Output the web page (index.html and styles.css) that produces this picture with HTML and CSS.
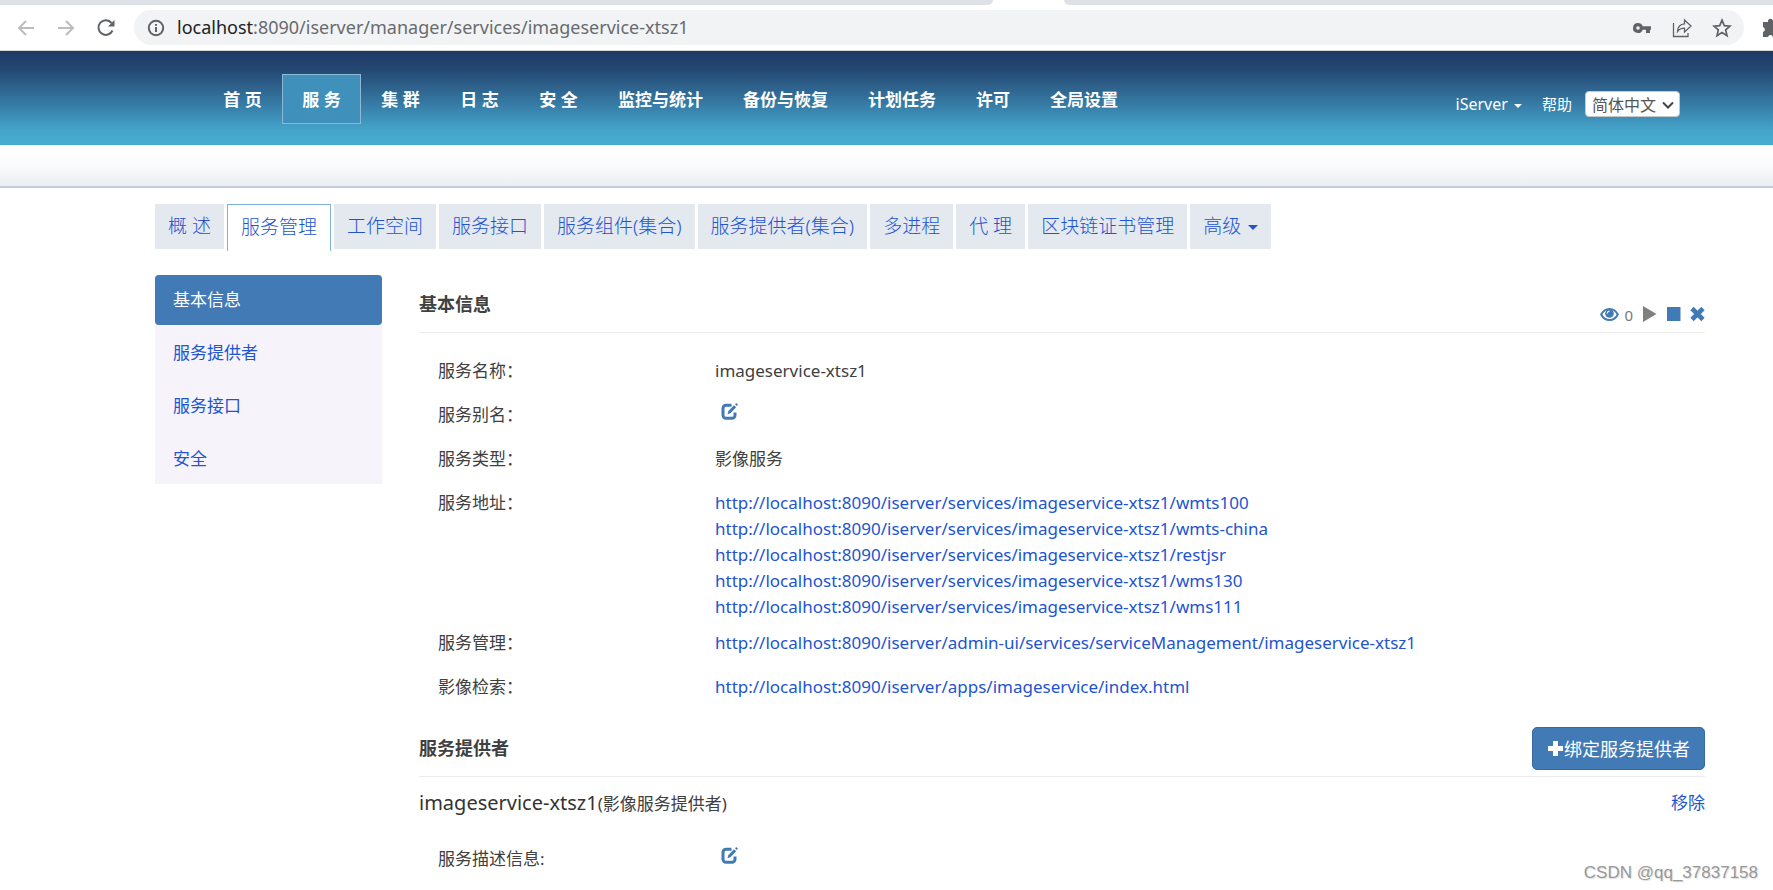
FILE: index.html
```html
<!DOCTYPE html>
<html lang="zh-CN">
<head>
<meta charset="utf-8">
<title>iServer 服务管理</title>
<link rel="stylesheet" href="styles.css">
</head>
<body>
<svg class="sprite" aria-hidden="true">
  <symbol id="edit" viewBox="0 0 17 17">
    <path d="M10.500 2.200H5a3 3 0 0 0-3 3v7a3 3 0 0 0 3 3h6a3 3 0 0 0 3-3V9.500" fill="none" stroke="currentColor" stroke-width="3"/>
    <path d="M6.500 11.200l.7-3 5.800-6 2.200 2-5.800 6z M14 1.200L15.200 0l1.800 1.700-1.200 1.300z" fill="currentColor"/>
  </symbol>
</svg>

<div class="browser">
  <div class="tabstrip"><span class="tab-left"></span><span class="tab-right"></span></div>
  <div class="toolbar">
    <div class="history">
      <button class="tool dim" aria-label="后退"><svg viewBox="0 0 20 20"><path d="M18 10H3M10 3l-7 7 7 7"/></svg></button>
      <button class="tool dim" aria-label="前进"><svg viewBox="0 0 20 20"><path d="M2 10h15M10 3l7 7-7 7"/></svg></button>
      <button class="tool" aria-label="刷新"><svg viewBox="0 0 20 20"><path d="M16.500 12.500A7.300 7.300 0 1 1 15.500 5"/><path d="M18.500 2v6.500H12z" fill="currentColor" stroke="none"/></svg></button>
    </div>
    <div class="omnibox">
      <svg class="info" viewBox="0 0 18 18"><circle cx="9" cy="9" r="7.200"/><path d="M9 8v5M9 5v1.800"/></svg>
      <span class="url"><b>localhost</b>:8090/iserver/manager/services/imageservice-xtsz1</span>
      <div class="omni-actions">
        <button class="tool" aria-label="密码"><svg viewBox="0 0 20 20"><path d="M6 5a5 5 0 1 0 4.700 6.700H14V15h4v-3.300h1V8.300h-8.300A5 5 0 0 0 6 5zm0 3.200a1.800 1.800 0 1 1 0 3.600 1.800 1.800 0 0 1 0-3.600z" fill="currentColor" stroke="none"/></svg></button>
        <button class="tool thin" aria-label="分享"><svg viewBox="0 0 20 20"><path d="M1.500 5v13.500H16V15M5.500 13.500c.3-5 3-7.500 7-7.700V2l6.500 6-6.500 6v-3.800c-3 0-5.200.8-7 3.300z"/></svg></button>
        <button class="tool" aria-label="收藏"><svg viewBox="0 0 20 20"><path d="M10 2.200l2.300 5.400 5.700.5-4.300 3.800 1.300 5.800-5-3.100-5 3.100 1.300-5.800L2 8.100l5.700-.5z" stroke-width="1.700"/></svg></button>
      </div>
    </div>
    <button class="tool ext" aria-label="扩展程序"><svg viewBox="0 0 20 20"><path d="M1 4h5a2.600 2.600 0 1 1 5 0h5v5a2.600 2.600 0 1 1 0 5v5h-5a2.600 2.600 0 0 0-5 0H1v-5a2.600 2.600 0 0 0 0-5z" fill="currentColor" stroke="none"/></svg></button>
  </div>
</div>

<header class="header">
  <nav class="nav">
    <a href="#">首 页</a>
    <a href="#" class="current">服 务</a>
    <a href="#">集 群</a>
    <a href="#">日 志</a>
    <a href="#">安 全</a>
    <a href="#">监控与统计</a>
    <a href="#">备份与恢复</a>
    <a href="#">计划任务</a>
    <a href="#">许可</a>
    <a href="#">全局设置</a>
  </nav>
  <div class="user">
    <a href="#" class="account">iServer <span class="caret"></span></a>
    <a href="#">帮助</a>
    <div class="lang">
      <select aria-label="语言"><option>简体中文</option><option>English</option></select>
      <svg viewBox="0 0 12 8"><path d="M1 1.500l5 5 5-5"/></svg>
    </div>
  </div>
</header>
<div class="subheader"></div>

<div class="page">
  <nav class="tabs">
    <a href="#">概 述</a>
    <a href="#" class="current">服务管理</a>
    <a href="#">工作空间</a>
    <a href="#">服务接口</a>
    <a href="#">服务组件(集合)</a>
    <a href="#">服务提供者(集合)</a>
    <a href="#">多进程</a>
    <a href="#">代 理</a>
    <a href="#">区块链证书管理</a>
    <a href="#">高级 <span class="caret"></span></a>
  </nav>

  <div class="columns">
    <nav class="side">
      <a href="#" class="current">基本信息</a>
      <a href="#">服务提供者</a>
      <a href="#">服务接口</a>
      <a href="#">安全</a>
    </nav>

    <main class="main">
      <section>
        <div class="head">
          <h2>基本信息</h2>
          <div class="controls">
            <button class="glyph eye" aria-label="访问次数"><svg viewBox="0 0 19 15"><path d="M1.200 7.500C3 4 6 2 9.500 2s6.500 2 8.300 5.500C16 11 13 13 9.500 13S3 11 1.200 7.500z" fill="none" stroke="currentColor" stroke-width="2"/><circle cx="9.500" cy="6.500" r="4.300" fill="currentColor"/><path d="M7.300 6.500a2.200 2.200 0 0 1 2.200-2.300" fill="none" stroke="#fff" stroke-width="1.200"/></svg></button>
            <span class="count">0</span>
            <button class="glyph off" aria-label="启动"><svg viewBox="0 0 15 16"><path d="M1 0l13.500 8L1 16z" fill="currentColor"/></svg></button>
            <button class="glyph" aria-label="停止"><svg viewBox="0 0 15 16"><path d="M1 1h13.500v14H1z" fill="currentColor"/></svg></button>
            <button class="glyph" aria-label="删除"><svg viewBox="0 0 15 16"><path d="M2 2.500l11 11M13 2.500l-11 11" stroke="currentColor" stroke-width="4.600"/></svg></button>
          </div>
        </div>
        <dl class="rows">
          <dt>服务名称：</dt><dd>imageservice-xtsz1</dd>
          <dt>服务别名：</dt><dd><button class="edit" aria-label="编辑别名"><svg><use href="#edit"/></svg></button></dd>
          <dt>服务类型：</dt><dd>影像服务</dd>
          <dt>服务地址：</dt>
          <dd>
            <a href="#">http://localhost:8090/iserver/services/imageservice-xtsz1/wmts100</a>
            <a href="#">http://localhost:8090/iserver/services/imageservice-xtsz1/wmts-china</a>
            <a href="#">http://localhost:8090/iserver/services/imageservice-xtsz1/restjsr</a>
            <a href="#">http://localhost:8090/iserver/services/imageservice-xtsz1/wms130</a>
            <a href="#">http://localhost:8090/iserver/services/imageservice-xtsz1/wms111</a>
          </dd>
          <dt>服务管理：</dt><dd><a href="#">http://localhost:8090/iserver/admin-ui/services/serviceManagement/imageservice-xtsz1</a></dd>
          <dt>影像检索：</dt><dd><a href="#">http://localhost:8090/iserver/apps/imageservice/index.html</a></dd>
        </dl>
      </section>

      <section>
        <div class="head">
          <h2>服务提供者</h2>
          <button class="bind"><svg viewBox="0 0 17 17"><path d="M8.500 1v15M1 8.500h15"/></svg>绑定服务提供者</button>
        </div>
        <div class="provider">
          <h3>imageservice-xtsz1<small>(影像服务提供者)</small></h3>
          <a href="#">移除</a>
        </div>
        <dl class="rows desc">
          <dt>服务描述信息:</dt><dd><button class="edit" aria-label="编辑描述"><svg><use href="#edit"/></svg></button></dd>
        </dl>
      </section>
    </main>
  </div>
</div>
<div class="watermark">CSDN @qq_37837158</div>
</body>
</html>
```
FILE: styles.css
```css
* { box-sizing: border-box; }
body {
  margin: 0;
  min-height: 100vh;
  overflow: hidden;
  position: relative;
  background: #fff;
  color: #404040;
  font: 17px/26px "Noto Sans", "Noto Sans CJK SC", sans-serif;
}
a { color: #2254d0; text-decoration: none; }
button { border: 0; padding: 0; background: none; font: inherit; color: inherit; }
svg { display: block; }
h2, h3, dl, dd { margin: 0; font-weight: inherit; }
.sprite { display: none; }

/* browser chrome */
.browser { border-bottom: 1px solid #d5d5d5; }
.tabstrip { display: flex; height: 5px; justify-content: space-between; }
.tab-left { width: 56%; background: #dee1e6; border-bottom-right-radius: 8px; }
.tab-right { width: 40%; background: #dee1e6; border-bottom-left-radius: 8px; }
.toolbar { display: flex; height: 45px; align-items: center; padding-left: 16px; overflow: hidden; }
.history { display: flex; gap: 20px; width: 118px; flex: none; }
.tool { width: 20px; height: 20px; color: #5f6368; flex: none; }
.tool svg { width: 20px; height: 20px; fill: none; stroke: currentColor; stroke-width: 2; }
.tool.dim { color: #babcbe; }
.tool.thin svg { stroke-width: 1.3; }
.omnibox { flex: 1; height: 35px; border-radius: 18px; background: #f1f3f4; display: flex; align-items: center; padding: 0 12px 0 13px; }
.info { width: 18px; height: 18px; fill: none; stroke: #5f6368; stroke-width: 2; }
.url { margin-left: 12px; padding-bottom: 2px; flex: 1; font-size: 18px; color: #686b6f; }
.url b { font-weight: 400; color: #202124; }
.omni-actions { display: flex; gap: 20px; }
.ext { margin: 0 -9px 0 18px; }

/* header */
.header {
  display: flex;
  justify-content: space-between;
  height: 94px;
  padding: 23px 93px 0 203px;
  background: linear-gradient(#203864, #244872 20%, #3880aa 60%, #45a5cb 85%, #48abd0);
}
.nav { display: flex; }
.nav a {
  height: 50px;
  min-width: 79px;
  padding: 0 19px;
  border: 1px solid transparent;
  color: #fff;
  font-weight: 700;
  line-height: 50px;
  text-align: center;
  white-space: nowrap;
}
.nav a:nth-child(9) { min-width: 0; }
.nav .current { background: #3f91bb; border-color: #8db8d8; }
.user { display: flex; align-items: center; height: 60px; font-size: 15px; }
.user a { color: #fff; margin-right: 13px; white-space: nowrap; }
.user .account { font-size: 16px; margin-right: 20px; }
.caret {
  display: inline-block;
  vertical-align: middle;
  margin-left: 2px;
  border: 4px solid transparent;
  border-top-color: currentColor;
  border-bottom: 0;
}
.lang { position: relative; }
.lang select {
  appearance: none;
  display: block;
  width: 95px;
  height: 26px;
  padding: 0 6px;
  border: 1px solid #c8c8c8;
  border-radius: 4px;
  background: #fff;
  color: #555;
  font: 16px/22px "Noto Sans CJK SC", sans-serif;
}
.lang svg { position: absolute; right: 6px; top: 10px; width: 12px; height: 8px; fill: none; stroke: #444; stroke-width: 2; pointer-events: none; }
.subheader { height: 43px; background: linear-gradient(#fff, #fafbfc 50%, #ebeef2); border-bottom: 2px solid #c5cad8; }

/* page */
.page { padding: 16px 68px 0 155px; }
.tabs { display: flex; gap: 3px; height: 47px; align-items: flex-start; }
.tabs a {
  height: 45px;
  padding: 0 13px;
  background: #e4e8ef;
  font-size: 19px;
  font-weight: 300;
  line-height: 44px;
  white-space: nowrap;
}
.tabs .current { height: 47px; background: #fff; border: 1px solid #7fb2e0; border-bottom: 0; }
.tabs .caret { border-width: 5px 5px 0; }
.columns { display: flex; gap: 37px; align-items: flex-start; padding-top: 24px; }
.side { display: flex; flex-direction: column; gap: 3px; width: 227px; flex: none; background: #f6f4fa; }
.side a { height: 50px; padding: 0 18px; line-height: 50px; }
.side .current { background: #427ab6; color: #fff; border-radius: 4px; }
.main { flex: 1; min-width: 0; }

.head { display: flex; justify-content: space-between; align-items: center; height: 58px; border-bottom: 1px solid #ececec; }
.head h2 { font-size: 18px; font-weight: 700; }
.controls { display: flex; align-items: center; gap: 9px; align-self: flex-end; padding-bottom: 4px; color: #777; }
.glyph { color: #427ab6; }
.glyph svg { width: 15px; height: 16px; }
.glyph.off { color: #808080; }
.glyph.eye { margin-right: -4px; }
.glyph.eye svg { width: 19px; height: 15px; }
.count { font-size: 15px; padding-top: 2px; }

.rows { display: grid; grid-template-columns: 277px 1fr; grid-auto-rows: minmax(44px, auto); padding: 25px 0 1px 19px; }
.rows dd { padding-bottom: 10px; }
.rows dd a { display: block; }
.edit { display: block; margin: 1px 0 0 6px; color: #427ab6; }
.edit svg { width: 17px; height: 17px; }
.bind {
  display: flex;
  align-items: center;
  align-self: flex-start;
  margin-top: 8px;
  height: 43px;
  padding: 0 14px;
  border: 1px solid #38699f;
  border-radius: 5px;
  background: #427ab6;
  color: #fff;
  font-size: 18px;
}
.bind svg { width: 17px; height: 17px; stroke: #fff; stroke-width: 5; }
.provider { display: flex; justify-content: space-between; align-items: center; height: 52px; }
.provider h3 { font-size: 20px; color: #333; }
.provider small { font-size: 17px; color: #404040; }
.rows.desc { padding-top: 17px; }

.watermark {
  position: absolute;
  right: 15px;
  bottom: 5px;
  color: #999;
  font: 17px/26px "Liberation Sans", Arial, sans-serif;
  text-shadow: 1px 1px 1px #ddd;
}
```
